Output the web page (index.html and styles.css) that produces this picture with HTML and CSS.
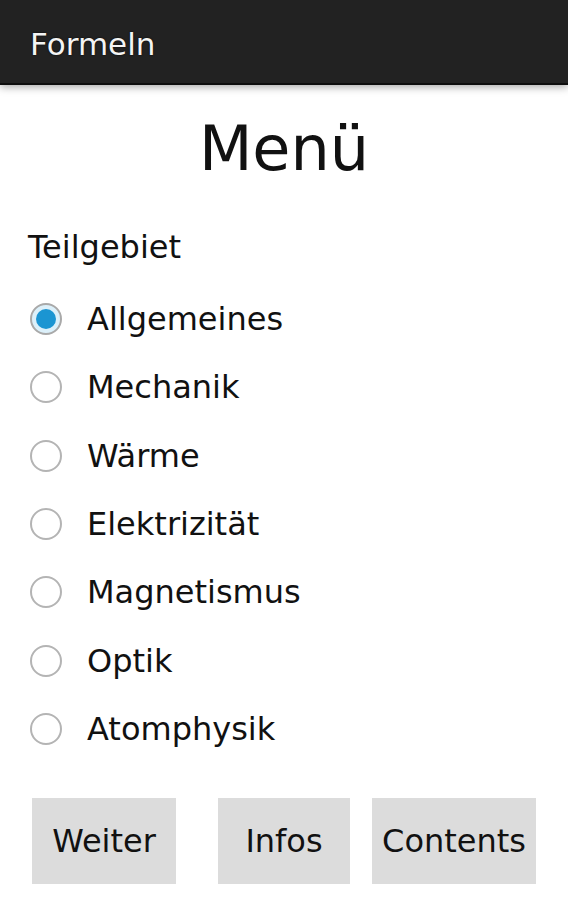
FILE: index.html
```html
<!DOCTYPE html>
<html lang="de">
<head>
<meta charset="utf-8">
<title>Formeln</title>
<link rel="stylesheet" href="styles.css">
</head>
<body>
<header class="appbar"><span class="appbar-title">Formeln</span></header>
<main class="content">
  <h1 class="title">Menü</h1>
  <div class="section-label">Teilgebiet</div>
  <div class="radio-group">
    <div class="radio-row"><span class="radio checked"></span><span class="radio-label">Allgemeines</span></div>
    <div class="radio-row"><span class="radio"></span><span class="radio-label">Mechanik</span></div>
    <div class="radio-row"><span class="radio"></span><span class="radio-label">Wärme</span></div>
    <div class="radio-row"><span class="radio"></span><span class="radio-label">Elektrizität</span></div>
    <div class="radio-row"><span class="radio"></span><span class="radio-label">Magnetismus</span></div>
    <div class="radio-row"><span class="radio"></span><span class="radio-label">Optik</span></div>
    <div class="radio-row"><span class="radio"></span><span class="radio-label">Atomphysik</span></div>
  </div>
  <div class="buttons">
    <div class="btn btn-weiter">Weiter</div>
    <div class="btn btn-infos">Infos</div>
    <div class="btn btn-contents">Contents</div>
  </div>
</main>
</body>
</html>
```
FILE: styles.css
```css
html, body {
  margin: 0;
  padding: 0;
  background: #ffffff;
}
body {
  font-family: "DejaVu Sans", "Liberation Sans", sans-serif;
  color: #111111;
  width: 568px;
  height: 900px;
  overflow: hidden;
}
.appbar {
  height: 85px;
  background: #222222;
  border-bottom: 2px solid #0e0e0e;
  box-shadow: 0 2px 8px rgba(0, 0, 0, 0.35);
  display: flex;
  align-items: center;
  padding: 4px 0 0 30px;
  box-sizing: border-box;
}
.appbar-title {
  color: #f4f4f4;
  font-size: 31px;
  line-height: 40px;
  text-shadow: 0 0 2px rgba(0, 0, 0, 0.9);
}
.content {
  display: flex;
  flex-direction: column;
}
.title {
  margin: 29px 0 0 0;
  font-weight: normal;
  font-size: 62px;
  line-height: 70px;
  text-align: center;
  color: #111111;
}
.section-label {
  margin: 43px 0 0 28px;
  font-size: 32px;
  line-height: 40px;
}
.radio-group {
  display: flex;
  flex-direction: column;
  margin-top: 18px;
}
.radio-row {
  height: 68.33px;
  display: flex;
  align-items: center;
  padding-left: 30px;
}
.radio {
  width: 32px;
  height: 32px;
  box-sizing: border-box;
  border: 2px solid #b4b4b4;
  border-radius: 50%;
  background: #ffffff;
  flex: none;
  display: flex;
  align-items: center;
  justify-content: center;
}
.radio.checked {
  border-color: #a9a9a9;
  background: #dcf0fa;
}
.radio.checked::after {
  content: "";
  width: 20px;
  height: 20px;
  border-radius: 50%;
  background: #1b95d2;
}
.radio-label {
  margin-left: 25px;
  font-size: 32px;
  line-height: 68px;
}
.buttons {
  display: flex;
  margin-top: 35px;
  padding-left: 32px;
}
.btn {
  height: 86px;
  background: #dcdcdc;
  display: flex;
  align-items: center;
  justify-content: center;
  font-size: 32px;
  color: #111111;
}
.btn-weiter {
  width: 144px;
}
.btn-infos {
  width: 132px;
  margin-left: 42px;
}
.btn-contents {
  width: 164px;
  margin-left: 22px;
}
```
